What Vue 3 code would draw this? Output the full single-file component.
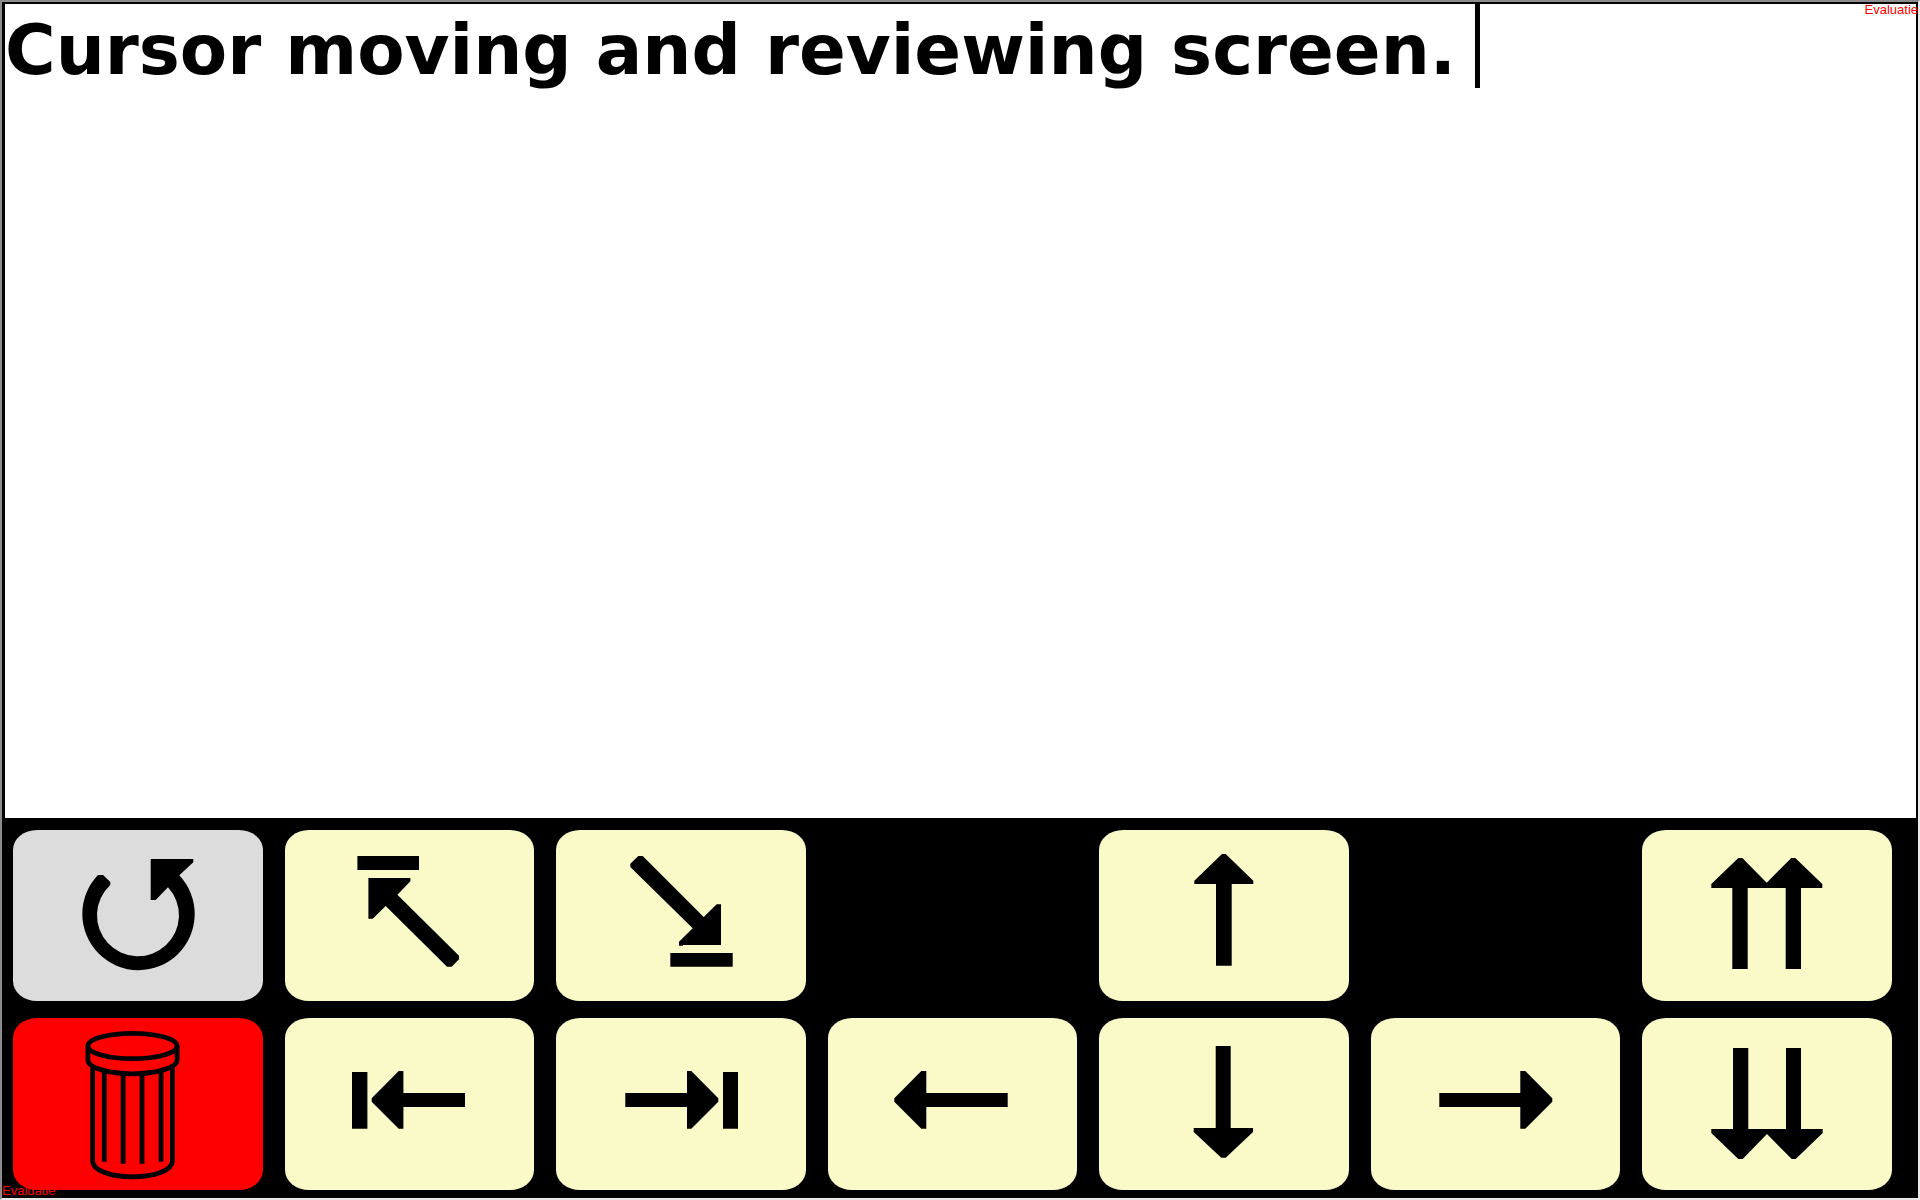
<script setup>
import { ref } from 'vue'

const text = ref('Cursor moving and reviewing screen. ')

const keys = [
  { id: 'undo', label: 'Undo', tone: 'grey', col: 1, row: 1,
    path: 'M85 45H90L97.3 52V55A41 41 0 1 0 155 57.3L142.7 70H137.7V29H180.3V32.3L166.3 45.3A56.2 56.2 0 1 1 85 45Z' },
  { id: 'start', label: 'Start of text', tone: 'cream', col: 2, row: 1,
    path: 'M73.4 26H135V40H73.4ZM84.4 48H126.4V51.3L113.4 64.7L175 125.7V129.3L167.7 136.7H163L101.7 76L88.7 88.7H84.4Z' },
  { id: 'end', label: 'End of text', tone: 'cream', col: 3, row: 1,
    path: 'M82.3 26H86.7L147.7 87L160.7 74.3H165V115H127V115.7H123V111.7L136.7 98.3L74.3 37V33.7ZM114.3 123H176.7V136.7H114.3Z' },
  { id: 'up', label: 'Up', tone: 'cream', col: 5, row: 1,
    path: 'M123 24H126.7L154.3 50.7V54H132.7V135.7H117V54H95.3V50.7Z' },
  { id: 'page-up', label: 'Page up', tone: 'cream', col: 7, row: 1,
    path: 'M96.3 28H100.3L124.7 52.7L149.3 28H153.3L180.3 54V58H159V139H143.7V58H105.7V139H90.3V58H69.3V54Z' },
  { id: 'delete', label: 'Delete all', tone: 'red', col: 1, row: 2 },
  { id: 'line-start', label: 'Start of line', tone: 'cream', col: 2, row: 2,
    path: 'M68 54H83.4V110.7H68ZM87.7 80.3L114.7 53H119.4V75H181V89H119.4V110.7H114.7L87.7 83.7Z' },
  { id: 'line-end', label: 'End of line', tone: 'cream', col: 3, row: 2,
    path: 'M69.3 75H131V53H135.3L162.3 80.3V83.7L135.3 110.7H131V89H69.3ZM167 54H182V110.7H167Z' },
  { id: 'left', label: 'Left', tone: 'cream', col: 4, row: 2,
    path: 'M66.3 80.3L93.3 53H98.3V75H179.7V89H98.3V110.7H93.3L66.3 83.7Z' },
  { id: 'down', label: 'Down', tone: 'cream', col: 5, row: 2,
    path: 'M116.7 28H131.7V110H154V114L126.7 139.7H122.3L94.7 114V110H116.7Z' },
  { id: 'right', label: 'Right', tone: 'cream', col: 6, row: 2,
    path: 'M68.3 75H149.3V53H154.3L181.3 80.3V83.7L154.3 110.7H149.3V89H68.3Z' },
  { id: 'page-down', label: 'Page down', tone: 'cream', col: 7, row: 2,
    path: 'M91 30H106.3V111H144V30H159V111H180.7V115L153.7 141H149.7L125 116L100.7 141H96.3L69.3 115V111H91Z' },
]
</script>

<template>
  <main class="window">
    <section class="editor">
      <textarea v-model="text" class="message" aria-label="Message" spellcheck="false"></textarea>
      <span class="caret" aria-hidden="true"></span>
    </section>

    <section class="keypad">
      <button
        v-for="key in keys"
        :key="key.id"
        type="button"
        class="key"
        :class="key.tone"
        :aria-label="key.label"
        :style="{ gridColumn: key.col, gridRow: key.row }"
      >
        <svg class="glyph" viewBox="0 0 250 171" aria-hidden="true">
          <path v-if="key.path" :d="key.path" />
          <g v-else class="bin">
            <ellipse cx="119.5" cy="28" rx="44.6" ry="12.7" />
            <path d="M74.9 28V42C74.9 50 96.5 55.8 119.5 55.8S164.1 50 164.1 42V28" />
            <path d="M79.6 48V143C79.6 152 96.5 158.8 119.5 158.8S159.4 152 159.4 143V48" />
            <path d="M91.3 53V143.7M110.1 55V145.7M129 55V145.7M148 53V143.7" />
          </g>
        </svg>
      </button>
    </section>

    <span class="mark mark-top">Evaluatie</span>
    <span class="mark mark-bottom">Evaluatie</span>
  </main>
</template>

<style>
body {
  margin: 0;
  background: #000;
}
</style>

<style scoped>
.window {
  position: relative;
  display: flex;
  flex-direction: column;
  box-sizing: border-box;
  min-height: 100vh;
  overflow: hidden;
  border: 2px solid;
  border-color: #8c8c8c #e8e8e8 #e8e8e8 #8c8c8c;
  background: #000;
}

.editor {
  position: relative;
  display: flex;
  flex: 1;
  margin: 2px 2px 0 3px;
  background: #fff;
}

.message {
  flex: 1;
  padding: 4px 0 0;
  border: 0;
  outline: 0;
  resize: none;
  overflow: hidden;
  background: transparent;
  color: #000;
  font: bold 69px/84px Verdana, "DejaVu Sans", sans-serif;
}

.caret {
  position: absolute;
  top: 0;
  left: 1470px;
  width: 5px;
  height: 84px;
  background: #000;
}

.keypad {
  display: grid;
  grid-template-columns: repeat(7, 1fr);
  grid-template-rows: 171px 172px;
  gap: 17px 22px;
  padding: 12px 26px 8px 11px;
}

.key {
  display: flex;
  align-items: flex-start;
  justify-content: center;
  min-width: 0;
  padding: 0;
  border: 0;
  border-radius: 24px / 20px;
  overflow: hidden;
}

.grey {
  background: #dcdcdc;
}

.cream {
  background: #fafac8;
}

.red {
  background: #f00;
}

.glyph {
  flex: none;
  width: 250px;
  height: 171px;
  fill: #000;
}

.bin {
  fill: none;
  stroke: #000;
  stroke-width: 4.8;
}

.mark {
  position: absolute;
  color: #f00;
  font: 13px/15px "Liberation Sans", Arial, sans-serif;
}

.mark-top {
  top: 0;
  right: 0;
}

.mark-bottom {
  bottom: 0;
  left: 0;
}
</style>
